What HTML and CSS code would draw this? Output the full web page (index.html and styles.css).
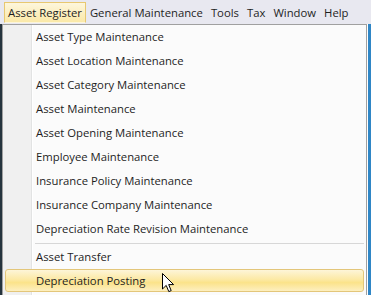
FILE: index.html
```html
<!DOCTYPE html>
<html lang="en">
<head>
    <meta charset="UTF-8">
    <title>Asset Register Menu</title>
    <link rel="stylesheet" href="styles.css">
</head>
<body>
    <!-- Barra de menú -->
    <div class="menubar">
        <span class="menu-item active">Asset Register</span>
        <span class="menu-item">General Maintenance</span>
        <span class="menu-item">Tools</span>
        <span class="menu-item">Tax</span>
        <span class="menu-item">Window</span>
        <span class="menu-item">Help</span>
    </div>

    <!-- Menú desplegable -->
    <div class="desk">
        <div class="edge-left"></div>
        <div class="dropdown">
            <div class="entry">Asset Type Maintenance</div>
            <div class="entry">Asset Location Maintenance</div>
            <div class="entry">Asset Category Maintenance</div>
            <div class="entry">Asset Maintenance</div>
            <div class="entry">Asset Opening Maintenance</div>
            <div class="entry">Employee Maintenance</div>
            <div class="entry">Insurance Policy Maintenance</div>
            <div class="entry">Insurance Company Maintenance</div>
            <div class="entry">Depreciation Rate Revision Maintenance</div>
            <div class="separator"></div>
            <div class="entry">Asset Transfer</div>
            <div class="entry hover">Depreciation Posting
                <svg class="cursor" width="13" height="20" viewBox="0 0 13 20">
                    <path d="M0.5 0.5 L0.5 16 L4.2 12.4 L6.8 18.6 L9.2 17.6 L6.7 11.6 L11.6 11.6 Z" fill="#fff" stroke="#000" stroke-width="1" stroke-linejoin="round"/>
                </svg>
            </div>
        </div>
        <div class="edge-right"></div>
    </div>
</body>
</html>
```

FILE: styles.css
```css
/* Estilos generales */
* {
    margin: 0;
    padding: 0;
    box-sizing: border-box;
}

body {
    width: 371px;
    height: 295px;
    overflow: hidden;
    background: #fbfbfb;
    font-family: 'Open Sans', 'Noto Sans', sans-serif;
    font-size: 11.3px;
    color: #1e1e1e;
}

/* Barra de menú */
.menubar {
    display: flex;
    align-items: center;
    height: 24px;
    padding: 2px 0 1px 4px;
    background: #e8e8f0;
}

.menu-item {
    height: 21px;
    line-height: 19px;
    padding: 0 3px;
    border: 1px solid transparent;
    white-space: nowrap;
}

.menu-item.active {
    background: linear-gradient(#fdf6dc, #fbe9a8);
    border-color: #e8c870;
    border-bottom-color: transparent;
}

/* Zona del desplegable */
.desk {
    display: flex;
    height: 271px;
}

.edge-left {
    width: 2px;
    background: #26343e;
}

.edge-right {
    width: 4px;
    border-left: 1px solid #fff;
    background: #2f86c6;
}

.dropdown {
    position: relative;
    flex: 1;
    padding: 0 2px;
    border: 1px solid #a0a0a0;
    border-bottom: none;
    background: linear-gradient(90deg, #f0f0f0 0, #f0f0f0 28px, #e2e3e3 28px, #e2e3e3 29px, #fff 29px, #fff 30px, #fbfbfb 30px);
}

.entry {
    position: relative;
    height: 24px;
    line-height: 22px;
    padding-left: 30px;
    border: 1px solid transparent;
    border-radius: 3px;
    white-space: nowrap;
}

.entry.hover {
    height: 23px;
    background: linear-gradient(#fdf5d8 0%, #fce9a4 45%, #fbe38a 60%, #fdefc0 100%);
    border-color: #e3c67a;
}

.separator {
    height: 1px;
    margin: 2px 0 1px 30px;
    background: #d7d7d7;
}

/* Puntero del ratón */
.cursor {
    position: absolute;
    left: 156px;
    top: 3px;
}
```
